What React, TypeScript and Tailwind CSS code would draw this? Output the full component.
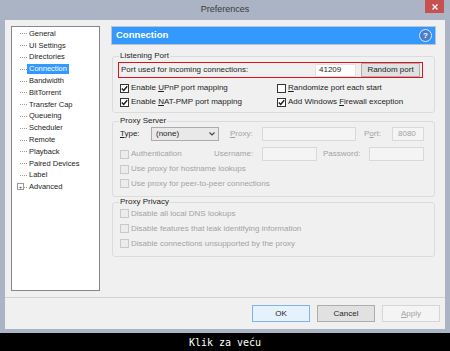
import React from 'react';

const treeItems = [
  'General', 'UI Settings', 'Directories', 'Connection', 'Bandwidth', 'BitTorrent',
  'Transfer Cap', 'Queueing', 'Scheduler', 'Remote', 'Playback', 'Paired Devices', 'Label', 'Advanced',
];

function Check({ checked, disabled }: { checked?: boolean; disabled?: boolean }) {
  return (
    <span
      className={
        disabled
          ? 'w-[9px] h-[9px] shrink-0 border border-[#c9c9c9] bg-[#ececec]'
          : 'w-[9px] h-[9px] shrink-0 border border-[#333] bg-white flex items-center justify-center'
      }
    >
      {checked && (
        <svg width="7" height="7" viewBox="0 0 7 7">
          <path d="M0.8 3.6 L2.7 5.5 L6.2 1.2" fill="none" stroke="#1a1a1a" strokeWidth="1.4" />
        </svg>
      )}
    </span>
  );
}

function CheckRow({ children, checked, disabled }: { children: React.ReactNode; checked?: boolean; disabled?: boolean }) {
  return (
    <div className="flex items-center gap-[2px]">
      <Check checked={checked} disabled={disabled} />
      <span className={disabled ? 'text-[#a3a3a3] whitespace-nowrap' : 'text-[#1e1e1e] whitespace-nowrap'}>{children}</span>
    </div>
  );
}

function Group({ title, children, className }: { title: string; children: React.ReactNode; className?: string }) {
  return (
    <fieldset className={`border border-[#dcdcdc] rounded-[3px] px-[7px] ${className ?? ''}`}>
      <legend className="ml-[-1px] px-[1px] leading-[10px] text-[#1e1e1e]">{title}</legend>
      {children}
    </fieldset>
  );
}

export default function App() {
  return (
    <div className="w-[450px] h-[351px] bg-black flex flex-col font-['Liberation_Sans',Arial,sans-serif] text-[8px] text-[#1e1e1e]">
      {/* window */}
      <div className="h-[333px] bg-[#aab4c4] flex flex-col">
        <div className="h-[20px] relative flex items-center justify-center text-[9px] text-[#3a3a3a]">
          Preferences
          <div className="absolute right-[6px] top-0 w-[19px] h-[13px] bg-[#c75050] flex items-center justify-center">
            <svg width="6" height="6" viewBox="0 0 6 6">
              <path d="M0.5 0.5 L5.5 5.5 M5.5 0.5 L0.5 5.5" stroke="white" strokeWidth="1.3" />
            </svg>
          </div>
        </div>

        <div className="flex-1 mx-[5px] mb-[4px] bg-[#f0f0f0] flex flex-col">
          <div className="h-[277px] flex pl-[6px] pt-[6px] gap-[11px]">
            {/* tree */}
            <div className="w-[89px] h-[265px] border border-[#828790] bg-white pt-[1px] text-[7.5px]">
              {treeItems.map((item) => {
                const active = item === 'Connection';
                const last = item === 'Advanced';
                return (
                  <div key={item} className="h-[11.8px] flex items-center pl-[8px]">
                    <span className="w-[7px] h-full flex items-center relative">
                      <span className="w-full border-t border-dotted border-[#9a9a9a]" />
                      {last && (
                        <span className="absolute left-[-3px] top-[2px] w-[7px] h-[7px] border border-[#9a9a9a] bg-white flex items-center justify-center text-[6px] leading-none text-[#444]">
                          +
                        </span>
                      )}
                    </span>
                    <span className={active ? 'px-[2px] bg-[#3399ff] text-white leading-[10px]' : 'px-[2px] text-[#1e1e1e] leading-[10px]'}>
                      {item}
                    </span>
                  </div>
                );
              })}
            </div>

            {/* right panel */}
            <div className="w-[325px] flex flex-col">
              <div className="h-[19px] border border-[#bcc3cc] bg-[#3399ff] flex items-center justify-between pl-[4px] pr-[3px]">
                <span className="text-white font-bold text-[9.5px]">Connection</span>
                <span className="w-[13px] h-[13px] rounded-full border border-[#dfe8f5] bg-[#4a7fcf] flex items-center justify-center text-white font-bold text-[8px] leading-none">
                  ?
                </span>
              </div>

              <div className="px-[1px] flex flex-col">
                <Group title="Listening Port" className="mt-[6px] pb-[3px]">
                  <div className="mt-[1px] ml-[-2px] mr-[4px] h-[16px] border border-[#e0131b] flex items-center pl-[2px] pr-[2px]">
                    <span className="flex-1 whitespace-nowrap">Port used for incoming connections:</span>
                    <span className="w-[41px] h-[13px] bg-white border border-[#e3e3e3] flex items-center pl-[3px]">41209</span>
                    <span className="ml-[5px] w-[59px] h-[14px] border border-[#adadad] bg-[#e1e1e1] flex items-center justify-center">
                      Random port
                    </span>
                  </div>
                  <div className="mt-[3px] grid grid-cols-[157px_1fr] grid-rows-[14px_14px] items-center">
                    <CheckRow checked>Enable <span className="underline">U</span>PnP port mapping</CheckRow>
                    <CheckRow><span className="underline">R</span>andomize port each start</CheckRow>
                    <CheckRow checked>Enable <span className="underline">N</span>AT-PMP port mapping</CheckRow>
                    <CheckRow checked>Add Windows <span className="underline">F</span>irewall exception</CheckRow>
                  </div>
                </Group>

                <Group title="Proxy Server" className="mt-[3px] pb-[5px]">
                  <div className="mt-[1px] h-[14px] flex items-center">
                    <span className="w-[31px]"><span className="underline">T</span>ype:</span>
                    <span className="w-[68px] h-[14px] border border-[#acacac] bg-[#e9e9e9] flex items-center justify-between pl-[4px] pr-[3px]">
                      (none)
                      <svg width="6" height="4" viewBox="0 0 6 4">
                        <path d="M0.5 0.5 L3 3 L5.5 0.5" fill="none" stroke="#444" strokeWidth="1.1" />
                      </svg>
                    </span>
                    <span className="ml-[11px] w-[32px] text-[#a3a3a3]"><span className="underline">P</span>roxy:</span>
                    <span className="w-[94px] h-[14px] border border-[#d9d9d9] bg-[#f4f4f4]" />
                    <span className="ml-[8px] w-[28px] text-[#a3a3a3]">P<span className="underline">o</span>rt:</span>
                    <span className="w-[32px] h-[14px] border border-[#d9d9d9] bg-[#f4f4f4] flex items-center pl-[5px] text-[#a3a3a3]">8080</span>
                  </div>
                  <div className="mt-[6px] h-[14px] flex items-center">
                    <span className="w-[94px]"><CheckRow disabled>Authentication</CheckRow></span>
                    <span className="w-[48px] text-[#a3a3a3]">Username:</span>
                    <span className="w-[55px] h-[14px] border border-[#d9d9d9] bg-[#f4f4f4]" />
                    <span className="ml-[6px] w-[46px] text-[#a3a3a3]">Password:</span>
                    <span className="w-[55px] h-[14px] border border-[#d9d9d9] bg-[#f4f4f4]" />
                  </div>
                  <div className="mt-[1px] grid grid-rows-[14.5px_14.5px] items-center">
                    <CheckRow disabled>Use proxy for hostname lookups</CheckRow>
                    <CheckRow disabled>Use proxy for peer-to-peer connections</CheckRow>
                  </div>
                </Group>

                <Group title="Proxy Privacy" className="pb-[5px]">
                  <div className="mt-[-1px] grid grid-rows-[15px_15px_15px] items-center">
                    <CheckRow disabled>Disable all local DNS lookups</CheckRow>
                    <CheckRow disabled>Disable features that leak identifying information</CheckRow>
                    <CheckRow disabled>Disable connections unsupported by the proxy</CheckRow>
                  </div>
                </Group>
              </div>
            </div>
          </div>

          {/* footer */}
          <div className="flex-1 border-t border-[#d3d3d3] flex justify-end items-start pt-[7px] pr-[5px] gap-[7px]">
            <button className="w-[58px] h-[17px] border border-[#7eb4ea] bg-[#e5f1fb] flex items-center justify-center">OK</button>
            <button className="w-[58px] h-[17px] border border-[#adadad] bg-[#e1e1e1] flex items-center justify-center">Cancel</button>
            <button className="w-[58px] h-[17px] border border-[#d5d5d5] bg-[#f4f4f4] flex items-center justify-center text-[#a3a3a3]">
              <span className="underline">A</span>pply
            </button>
          </div>
        </div>
      </div>

      <div className="flex-1 flex items-center justify-center text-white font-['DejaVu_Sans_Mono',monospace] text-[10px]">
        Klik za veću
      </div>
    </div>
  );
}
